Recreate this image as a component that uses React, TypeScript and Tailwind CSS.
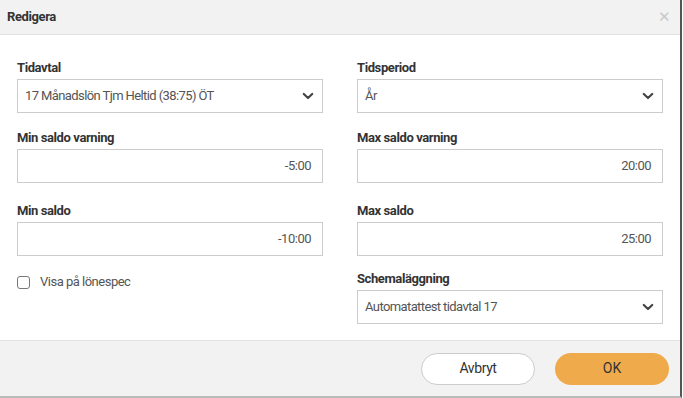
import type { ReactNode } from 'react';

const font = { fontFamily: 'Roboto, "Liberation Sans", sans-serif' };

function Chevron() {
  return (
    <svg className="h-3 w-3 text-[#444]" viewBox="0 0 12 12" fill="none" stroke="currentColor">
      <path d="M1.8 4l4.2 4 4.2-4" strokeWidth={2.2} strokeLinecap="round" strokeLinejoin="round" />
    </svg>
  );
}

function Field({ label, className = '', children }: { label: string; className?: string; children: ReactNode }) {
  return (
    <div className={`flex flex-col ${className}`}>
      <label className="text-[13px] font-bold text-[#333] leading-4 mb-[3px] tracking-[-0.4px]">{label}</label>
      {children}
    </div>
  );
}

function SelectBox({ value }: { value: string }) {
  return (
    <div className="h-[34px] border border-[#ccc] bg-white flex items-center justify-between pl-[7px] pr-[8px] text-[13px] text-[#555] tracking-[-0.6px]">
      <span>{value}</span>
      <Chevron />
    </div>
  );
}

function NumberBox({ value }: { value: string }) {
  return (
    <div className="h-[34px] border border-[#ccc] bg-white flex items-center justify-end pr-[11px] text-[13px] text-[#555] tracking-[-0.5px]">
      {value}
    </div>
  );
}

export default function App() {
  return (
    <div className="w-[683px] h-[398px] bg-white" style={font}>
      <div className="w-[682px] h-[398px] flex flex-col border-r-2 border-b-2 border-r-[#555] border-b-[#bbb] bg-white">
        <div className="h-[35px] bg-[#f2f2f2] border-b border-[#e2e2e2] flex items-center justify-between pl-[7px] pr-[9px]">
          <h1 className="text-[13px] font-bold text-[#333] tracking-[-0.4px]">Redigera</h1>
          <span className="text-[#c8c8c8] text-[15px] leading-none">✕</span>
        </div>

        <div className="flex-1 grid grid-cols-2 gap-x-[34px] gap-y-[17px] px-[17px] pt-[25px] content-start">
          <Field label="Tidavtal">
            <SelectBox value="17 Månadslön Tjm Heltid (38:75) ÖT" />
          </Field>
          <Field label="Tidsperiod">
            <SelectBox value="År" />
          </Field>
          <Field label="Min saldo varning">
            <NumberBox value="-5:00" />
          </Field>
          <Field label="Max saldo varning">
            <NumberBox value="20:00" />
          </Field>
          <Field label="Min saldo" className="mt-[3px]">
            <NumberBox value="-10:00" />
          </Field>
          <Field label="Max saldo" className="mt-[3px]">
            <NumberBox value="25:00" />
          </Field>
          <div className="flex items-start pt-[1px]">
            <label className="flex items-center gap-[10px] text-[13px] leading-4 text-[#555] tracking-[-0.5px]">
              <span className="h-[13px] w-[13px] rounded-[3px] border border-[#777] bg-white" />
              Visa på lönespec
            </label>
          </div>
          <Field label="Schemaläggning" className="-mt-[2px]">
            <SelectBox value="Automatattest tidavtal 17" />
          </Field>
        </div>

        <div className="h-[56px] bg-[#f2f2f2] border-t border-[#e2e2e2] flex items-center justify-end gap-[20px] pr-[11px]">
          <button className="w-[114px] h-[32px] rounded-full border border-[#ccc] bg-white text-[14px] text-[#333] tracking-[-0.4px]">
            Avbryt
          </button>
          <button className="w-[114px] h-[32px] rounded-full bg-[#efab4b] text-[14px] text-[#333]">
            OK
          </button>
        </div>
      </div>
    </div>
  );
}
